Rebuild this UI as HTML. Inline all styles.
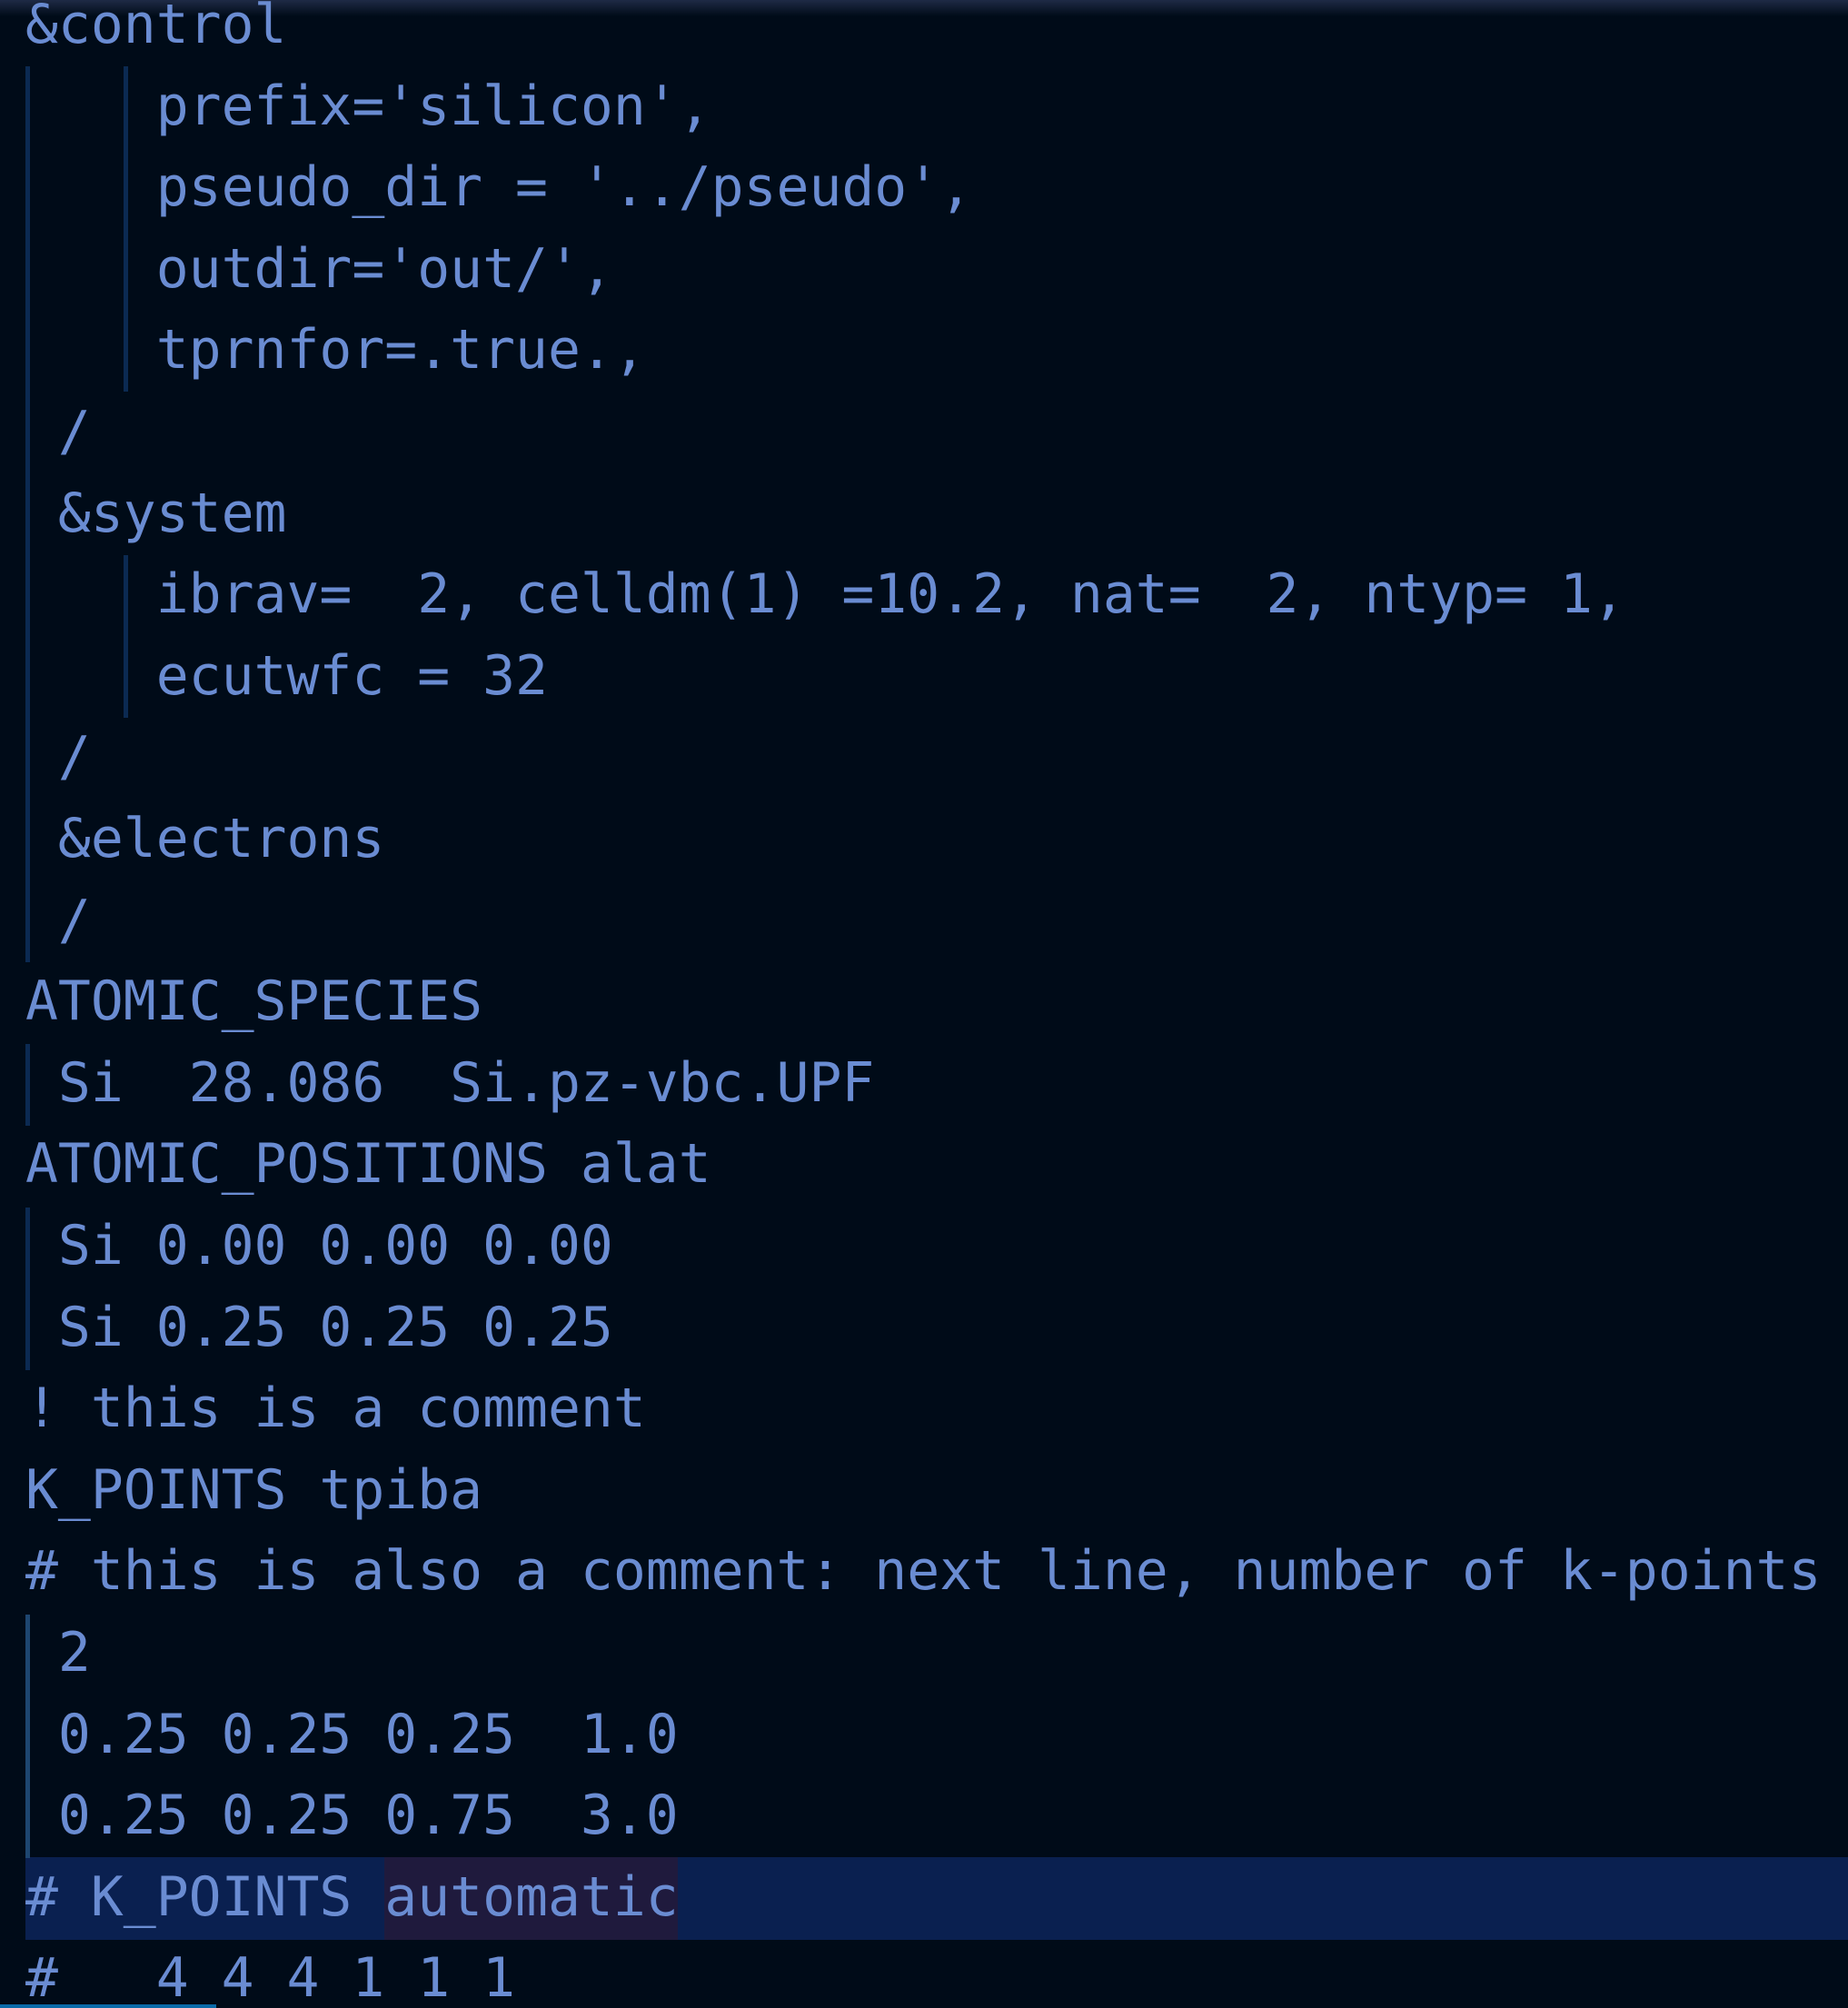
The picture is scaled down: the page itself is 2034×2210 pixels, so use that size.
<!DOCTYPE html>
<html><head><meta charset="utf-8"><style>
html,body{margin:0;padding:0;background:#000b18;width:2034px;height:2210px;overflow:hidden;position:relative}
.l{position:absolute;left:28px;height:90px;line-height:90px;font-family:"DejaVu Sans Mono","Liberation Mono",monospace;font-size:59.7px;color:#6a8cd2;white-space:pre}
.g{position:absolute;width:5px;background:#0b2a52}
</style></head><body>
<div style="position:absolute;left:0;top:0;width:2034px;height:18px;background:linear-gradient(#1e2a45,#000b18)"></div>
<div style="position:absolute;left:28px;top:2044px;width:2006px;height:91px;background:#0a2050"></div>
<div style="position:absolute;left:423px;top:2044px;width:323px;height:91px;background:#1f1a3d"></div>
<div class="g" style="left:28px;top:73px;height:986px"></div>
<div class="g" style="left:136px;top:73px;height:358px"></div>
<div class="g" style="left:136px;top:611px;height:179px"></div>
<div class="g" style="left:28px;top:1149px;height:90px"></div>
<div class="g" style="left:28px;top:1329px;height:179px"></div>
<div class="g" style="left:28px;top:1777px;height:268px;background:#1e4670"></div>
<div style="position:absolute;left:0;top:2206px;width:238px;height:4px;background:#0a6aa8"></div>
<div class="l" style="top:-17px">&amp;control</div>
<div class="l" style="top:73px">    prefix='silicon',</div>
<div class="l" style="top:162px">    pseudo_dir = '../pseudo',</div>
<div class="l" style="top:252px">    outdir='out/',</div>
<div class="l" style="top:341px">    tprnfor=.true.,</div>
<div class="l" style="top:431px"> /</div>
<div class="l" style="top:521px"> &amp;system</div>
<div class="l" style="top:610px">    ibrav=  2, celldm(1) =10.2, nat=  2, ntyp= 1,</div>
<div class="l" style="top:700px">    ecutwfc = 32</div>
<div class="l" style="top:789px"> /</div>
<div class="l" style="top:879px"> &amp;electrons</div>
<div class="l" style="top:969px"> /</div>
<div class="l" style="top:1058px">ATOMIC_SPECIES</div>
<div class="l" style="top:1148px"> Si  28.086  Si.pz-vbc.UPF</div>
<div class="l" style="top:1237px">ATOMIC_POSITIONS alat</div>
<div class="l" style="top:1327px"> Si 0.00 0.00 0.00</div>
<div class="l" style="top:1417px"> Si 0.25 0.25 0.25</div>
<div class="l" style="top:1506px">! this is a comment</div>
<div class="l" style="top:1596px">K_POINTS tpiba</div>
<div class="l" style="top:1685px"># this is also a comment: next line, number of k-points</div>
<div class="l" style="top:1775px"> 2</div>
<div class="l" style="top:1865px"> 0.25 0.25 0.25  1.0</div>
<div class="l" style="top:1954px"> 0.25 0.25 0.75  3.0</div>
<div class="l" style="top:2044px"># K_POINTS automatic</div>
<div class="l" style="top:2133px">#   4 4 4 1 1 1</div>
</body></html>
